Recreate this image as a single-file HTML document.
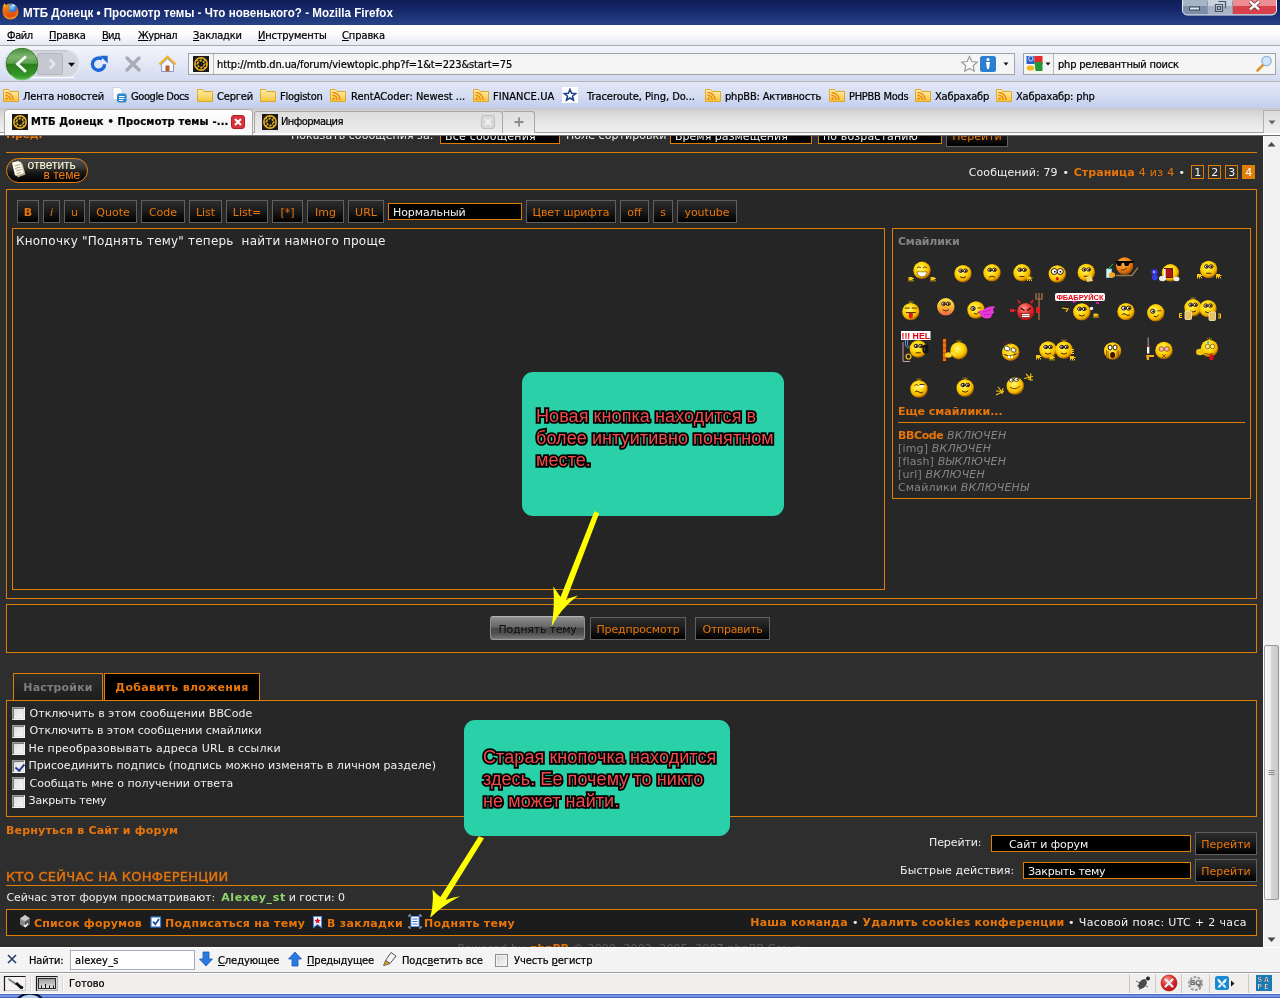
<!DOCTYPE html>
<html lang="ru">
<head>
<meta charset="utf-8">
<title>МТБ Донецк • Просмотр темы - Что новенького? - Mozilla Firefox</title>
<style>
*{box-sizing:border-box;margin:0;padding:0}
html,body{width:1280px;height:998px;overflow:hidden;background:#2e2e2e}
body>div{will-change:transform}
body{position:relative;font-family:"DejaVu Sans Condensed","Liberation Sans",sans-serif;font-size:11px;color:#000;-webkit-text-stroke:0.22px #000}
.abs{position:absolute}
/* ---------- window chrome ---------- */
#titlebar{position:absolute;left:0;top:0;width:1280px;height:25px;background:linear-gradient(#101e56 0%,#16286a 40%,#274388 100%)}
#title{position:absolute;left:23px;top:5px;font:bold 13px "Liberation Sans",sans-serif;color:#fff;white-space:nowrap;transform:scaleX(0.893);transform-origin:0 0}
#menubar{position:absolute;left:0;top:25px;width:1280px;height:21px;background:linear-gradient(#ffffff 0%,#fdfdfe 40%,#e6eaf6 100%);border-bottom:1px solid #a9a9a9}
#menubar span{position:absolute;top:4px;white-space:nowrap}
#menubar u{text-decoration:underline}
#navbar{position:absolute;left:0;top:46px;width:1280px;height:36px;background:linear-gradient(#f3f5fb 0%,#e4e8f6 50%,#d3daf0 100%);border-bottom:1px solid #b5b5b5}
#bmbar{position:absolute;left:0;top:82px;width:1280px;height:26px;background:linear-gradient(#e3e8f6 0%,#d2dbf2 60%,#c1cdec 100%)}
#bmbar .bm{position:absolute;top:8px;white-space:nowrap}
#tabbar{position:absolute;left:0;top:108px;width:1280px;height:28px;background:linear-gradient(#c4c6cc 0%,#d4d4d6 12%,#e2e2e2 40%,#ededed 75%,#f2f2f2 100%)}
/* ---------- page ---------- */
#page{position:absolute;left:0;top:136px;width:1263px;height:811px;background:#2e2e2e;overflow:hidden;font-family:"DejaVu Sans","Liberation Sans",sans-serif;font-size:11px;color:#eee}
#vscroll{position:absolute;left:1263px;top:136px;width:17px;height:811px;background:#f3f3f3}
#findbar{position:absolute;left:0;top:947px;width:1280px;height:26px;background:#f4f4f4;box-shadow:inset 0 1px 0 #fefefe;border-bottom:1px solid #9c9c9c}
#statusbar{position:absolute;left:0;top:973px;width:1280px;height:21px;background:#f0eeec;box-shadow:inset 0 1px 0 #fdfdfd,inset 0 -1px 0 #fbfbfb}
#taskbar{position:absolute;left:0;top:994px;width:1280px;height:4px;background:linear-gradient(#4463b4 0%,#5577cc 24%,#7596ea 40%,#7596ea 62%,#4a69b8 80%,#3f5eac 100%)}

/* page elements */
#page,#titlebar{-webkit-text-stroke:0}
#page *{white-space:nowrap}
.o{color:#e8750a}
.w{color:#f0f0f0}
.hr{position:absolute;height:1px;background:#de7e04}
.panel{position:absolute;border:1px solid #de7e04;background:#272727}
.btn{position:absolute;height:23px;border:1px solid #606060;background:linear-gradient(#2d2d2d 0%,#1c1c1c 45%,#000 100%);color:#e8750a;text-align:center;line-height:23px;font-size:11px}
.sel{position:absolute;height:17px;border:1px solid #de7e04;background:#000;color:#f4f4f4;line-height:17px;padding-left:4px;font-size:11px}
.cb{position:absolute;left:12px;width:13px;height:13px;border:1px solid #9a9a9a;border-right-color:#f6f6f6;border-bottom-color:#f6f6f6;background:linear-gradient(135deg,#dadada 0%,#ececec 55%,#f8f8f8 100%);box-shadow:inset 1px 1px 0 #7c7c7c,inset -1px -1px 0 #e0e0e0}
.cbl{position:absolute;left:29px;color:#f0f0f0;font-size:11px;line-height:14px}

.pg{top:29px;width:13px;height:14px;border:1px solid #de7e04;color:#f4f4f4;text-align:center;line-height:14px;font-size:11px;letter-spacing:-0.3px}
.pg.cur{background:#de7e04;color:#fff}
.btn.hot{border:1px solid #8e8e8e;border-top-color:#b4b4b4;border-bottom-color:#9c9c9c;border-radius:3px;background:linear-gradient(#8f8f8f 0%,#7c7c7c 20%,#666 46%,#484848 52%,#505050 75%,#787878 100%);color:#0c0c0c;line-height:26px}
.tab{height:28px;border:1px solid #de7e04;border-bottom:none;text-align:center;line-height:28px;font-weight:bold}
.cb.ck:after{content:"";position:absolute;left:3.800px;top:0.500px;width:3.500px;height:7px;border:solid #2a3a98;border-width:0 2px 2px 0;transform:rotate(40deg)}
.callout{position:absolute;background:#29d0a8;border-radius:11px}
.callout div{position:absolute;font:18px/22px "Liberation Sans",sans-serif;color:#f04a4a;letter-spacing:0.08px;-webkit-text-stroke:3.600px #000;paint-order:stroke fill;text-shadow:0 0 1px #000}
</style>
<style id="cal">
#m1{left:7.80px;letter-spacing:-0.404px}
#m2{left:49.70px;letter-spacing:-0.181px}
#m3{left:102.30px;letter-spacing:-0.759px}
#m4{left:138.00px;letter-spacing:-0.407px}
#m5{left:193.60px;letter-spacing:-0.142px}
#m6{left:258.60px;letter-spacing:-0.201px}
#m7{left:343.00px;letter-spacing:-0.091px}
#u1{left:217.50px;letter-spacing:-0.095px}
#u2{left:1058.50px;letter-spacing:-0.208px}
#bm1{left:23.75px;letter-spacing:-0.156px}
#bm2{left:131.90px;letter-spacing:-0.406px}
#bm3{left:217.75px;letter-spacing:-0.166px}
#bm4{left:280.60px;letter-spacing:-0.265px}
#bm5{left:351.50px;letter-spacing:0.004px}
#bm6{left:493.50px;letter-spacing:0.085px}
#bm7{left:588.25px;letter-spacing:-0.037px}
#bm8{left:726.00px;letter-spacing:-0.181px}
#bm9{left:849.00px;letter-spacing:-0.275px}
#bm10{left:935.00px;letter-spacing:-0.164px}
#bm11{left:1016.50px;letter-spacing:-0.164px}
#tt1{left:31.50px;letter-spacing:0.195px}
#tt2{left:281.90px;letter-spacing:-0.541px}
#fb0{left:75.50px;letter-spacing:0.161px}
#fb1{left:29.50px;letter-spacing:-0.176px}
#fb2{left:218.75px;letter-spacing:-0.065px}
#fb3{left:308.00px;letter-spacing:-0.177px}
#fb4{left:402.50px;letter-spacing:-0.089px}
#fb5{left:513.75px;letter-spacing:-0.085px}
#st1{left:69.50px;letter-spacing:-0.048px}
#a1{left:290.20px;letter-spacing:0.046px}
#a2{letter-spacing:0.198px}
#a3{left:565.20px;letter-spacing:0.061px}
#a4{letter-spacing:0.026px}
#a5{letter-spacing:0.135px}
#c1{left:968.75px;letter-spacing:0.084px}
#c2{left:1062.50px;letter-spacing:0.000px}
#c3{left:1073.75px;letter-spacing:0.042px}
#c4{left:1138.75px;letter-spacing:0.302px}
#c5{left:1178.50px;letter-spacing:0.000px}
#b1{letter-spacing:-0.090px}
#b2{letter-spacing:-0.145px}
#ta{left:15.50px;letter-spacing:0.205px}
#s1{left:898.75px;letter-spacing:-0.211px}
#s2{left:897.40px;letter-spacing:-0.029px}
#h1{letter-spacing:-0.225px}
#h2{letter-spacing:-0.165px}
#h3{letter-spacing:-0.290px}
#tb1{letter-spacing:0.171px}
#tb2{letter-spacing:0.345px}
#k1{left:29.45px;letter-spacing:0.074px}
#k2{left:29.45px;letter-spacing:-0.038px}
#k3{left:28.45px;letter-spacing:0.185px}
#k4{left:28.45px;letter-spacing:0.049px}
#k5{left:29.45px;letter-spacing:0.041px}
#k6{left:28.60px;letter-spacing:-0.233px}
#r1{left:5.40px;letter-spacing:0.196px}
#g1{left:928.75px;letter-spacing:-0.092px}
#g2{letter-spacing:-0.063px}
#g3{left:899.60px;letter-spacing:0.103px}
#g4{letter-spacing:-0.260px}
#q1{left:5.40px;letter-spacing:0.244px}
#w1{left:6.40px;letter-spacing:-0.039px}
#w2{left:221.20px;letter-spacing:0.660px}
#w3{left:288.80px;letter-spacing:-0.085px}
#f1{left:34.40px;letter-spacing:0.156px}
#f2{left:164.00px;letter-spacing:0.299px}
#f3{left:326.30px;letter-spacing:0.286px}
#f4{left:423.80px;letter-spacing:0.300px}
#f5{left:750.20px;letter-spacing:0.233px}
#f6{left:852.00px;letter-spacing:0.000px}
#f7{left:862.50px;letter-spacing:0.232px}
#f8{left:1068.00px;letter-spacing:0.000px}
#f9{left:1078.80px;letter-spacing:0.340px}
#p1{left:457.60px;letter-spacing:0.406px}
#p2{left:530.00px;letter-spacing:-0.391px}
#p3{left:572.75px;letter-spacing:0.148px}
</style>
</head>
<body>
<svg width="0" height="0" style="position:absolute">
<defs>
<linearGradient id="gF" x1="0" y1="0" x2="0" y2="1"><stop offset="0" stop-color="#fff3b0"/><stop offset="1" stop-color="#f2c43a"/></linearGradient>
<linearGradient id="gFb" x1="0" y1="0" x2="0" y2="1"><stop offset="0" stop-color="#f7d774"/><stop offset="1" stop-color="#e9a91e"/></linearGradient>
<linearGradient id="gBack" x1="0" y1="0" x2="0" y2="1"><stop offset="0" stop-color="#2e7e20"/><stop offset="0.5" stop-color="#2b7d1d"/><stop offset="0.85" stop-color="#339628"/><stop offset="1" stop-color="#4cb23e"/></linearGradient>
<linearGradient id="gBackT" x1="0" y1="0" x2="0" y2="1"><stop offset="0" stop-color="#4c913e"/><stop offset="0.55" stop-color="#7db56f"/><stop offset="1" stop-color="#5a9f4b"/></linearGradient>
<radialGradient id="gSm" cx="0.42" cy="0.38" r="0.62"><stop offset="0" stop-color="#fff580"/><stop offset="0.5" stop-color="#ffd808"/><stop offset="0.8" stop-color="#f2ae00"/><stop offset="1" stop-color="#9a5c00"/></radialGradient>
<radialGradient id="gRed" cx="0.4" cy="0.3" r="0.8"><stop offset="0" stop-color="#ff9a8a"/><stop offset="0.5" stop-color="#e02a2a"/><stop offset="1" stop-color="#a00d0d"/></radialGradient>
<symbol id="fav" viewBox="0 0 16 16"><rect width="16" height="16" fill="#1a1a1a"/><circle cx="8" cy="8" r="6.2" fill="none" stroke="#e8b020" stroke-width="1.5"/><circle cx="8" cy="8" r="3.3" fill="none" stroke="#e8b020" stroke-width="1.6" stroke-dasharray="2 1.4"/><circle cx="8" cy="8" r="1.3" fill="#1a1a1a"/><path d="M8 2v3M8 11v3M2 8h3M11 8h3M3.8 3.8l2 2M10.2 10.2l2 2M12.2 3.8l-2 2M5.8 10.2l-2 2" stroke="#e8b020" stroke-width="0.9"/></symbol>
<symbol id="folder" viewBox="0 0 16 16"><path d="M0.5 2.5h5l1.5 2h8.5v10h-15z" fill="url(#gF)" stroke="#e0a82a" stroke-width="1"/><path d="M0.5 5.5h15" stroke="#f6dc7a" stroke-width="1"/></symbol>
<symbol id="rss" viewBox="0 0 16 16"><path d="M0.5 2.5h5l1.5 2h8.5v10h-15z" fill="url(#gF)" stroke="#e0a82a" stroke-width="1"/><circle cx="3.6" cy="11.8" r="1.3" fill="#f08a10"/><path d="M2.4 8.2a4.6 4.6 0 0 1 4.8 4.8" fill="none" stroke="#f08a10" stroke-width="1.5"/><path d="M2.4 5.4a7.4 7.4 0 0 1 7.6 7.6" fill="none" stroke="#f08a10" stroke-width="1.5"/></symbol>
<linearGradient id="gTh" x1="0" y1="0" x2="1" y2="0"><stop offset="0" stop-color="#fafafa"/><stop offset="0.45" stop-color="#ededed"/><stop offset="0.5" stop-color="#d6d6d6"/><stop offset="1" stop-color="#c8c8c8"/></linearGradient>
<radialGradient id="gOr" cx="0.4" cy="0.35" r="0.7"><stop offset="0" stop-color="#ffb040"/><stop offset="0.6" stop-color="#f08010"/><stop offset="1" stop-color="#a04800"/></radialGradient>
<linearGradient id="gBl" x1="0" y1="0" x2="0" y2="1"><stop offset="0" stop-color="#ffe24a"/><stop offset="0.5" stop-color="#f8b830"/><stop offset="1" stop-color="#f06048"/></linearGradient>
<linearGradient id="gRul" x1="0" y1="0" x2="0" y2="1"><stop offset="0" stop-color="#9a9a9a"/><stop offset="1" stop-color="#e8e8e8"/></linearGradient>
<linearGradient id="gFx" x1="0" y1="0" x2="0" y2="1"><stop offset="0" stop-color="#e05a10"/><stop offset="1" stop-color="#f09020"/></linearGradient>
<linearGradient id="gFx2" x1="0" y1="0" x2="0.300" y2="1"><stop offset="0" stop-color="#f8b020"/><stop offset="0.400" stop-color="#f07a10"/><stop offset="1" stop-color="#e04a08"/></linearGradient>
<radialGradient id="gGl" cx="0.500" cy="0.300" r="0.800"><stop offset="0" stop-color="#8adcff"/><stop offset="0.500" stop-color="#2a78d8"/><stop offset="1" stop-color="#1a3a9a"/></radialGradient>
</defs></svg>

<div id="titlebar"><svg class="abs" style="left:0;top:0" width="1280" height="25" viewBox="0 0 1280 25">
<circle cx="10.500" cy="11.500" r="8" fill="url(#gFx)"/><circle cx="11.500" cy="9.300" r="5.600" fill="url(#gGl)"/><path d="M12 4.500c1.500-0.500 3 0.500 3.500 2c-1-0.500-2-0.300-2.500 0.500z" fill="#d8f0ff"/><path d="M2.800 7.500c0.200-1.800 1-3.300 1.800-4.200c0.200 1 0.700 1.700 1.500 2.100c1-0.900 2.500-1.300 3.500-1c-1.200 0.700-1.600 1.700-1 2.600c1 0 2 0.400 2.500 1c-1.500 0.200-2.500 1-2.500 2c0.500 1.500 2.500 2.500 4.500 2c2-0.500 3.500-2 4-4c0.800 3-0.200 6-2 7.700c-2 1.800-5 2.300-7.500 1.300c-3-1.200-5-4-5-7c0-1 0-1.800 0.200-2.500z" fill="url(#gFx2)"/><path d="M4.600 3.300c0.200 1 0.700 1.700 1.500 2.100l-1.800 1.800z" fill="#f8c020"/>
<path d="M1182.500 0v10c0 3 2 5 5 5h84c3 0 5-2 5-5V0z" fill="#8a9ab0" stroke="#e8ecf4" stroke-width="1"/>
<path d="M1183 0h24v14h-19c-3 0-5-2-5-4z" fill="#7d8ea6"/><rect x="1183" y="0" width="24" height="6" fill="#b8c4d4" opacity="0.700"/>
<rect x="1208" y="0" width="24" height="14" fill="#a8b4c6"/><rect x="1208" y="0" width="24" height="6" fill="#d0d8e4" opacity="0.800"/>
<path d="M1233 0h43v10c0 2-2 4-5 4h-38z" fill="#d8404a"/><rect x="1233" y="0" width="43" height="6" fill="#f0a0a4" opacity="0.800"/>
<rect x="1189.500" y="7" width="10" height="3" fill="#e4e8f0" stroke="#3a4658" stroke-width="1"/>
<path d="M1215.500 4.500h7v7h-7zM1218.500 1.500h7v7" fill="none" stroke="#4a5668" stroke-width="1.200"/><rect x="1217.500" y="6.500" width="3" height="3" fill="none" stroke="#4a5668" stroke-width="1"/>
<path d="M1250 1.500l9 8M1259 1.500l-9 8" stroke="#6a2a30" stroke-width="4"/><path d="M1250 1.500l9 8M1259 1.500l-9 8" stroke="#fff" stroke-width="2.400"/>
</svg><div id="title">МТБ Донецк • Просмотр темы - Что новенького? - Mozilla Firefox</div></div>
<div id="menubar">
<span id="m1" style="left:7px"><u>Ф</u>айл</span>
<span id="m2" style="left:49px"><u>П</u>равка</span>
<span id="m3" style="left:102px"><u>В</u>ид</span>
<span id="m4" style="left:138px"><u>Ж</u>урнал</span>
<span id="m5" style="left:193px"><u>З</u>акладки</span>
<span id="m6" style="left:258px"><u>И</u>нструменты</span>
<span id="m7" style="left:342px"><u>С</u>правка</span>
</div>
<div id="navbar">
<svg class="abs" style="left:0;top:0" width="190" height="36" viewBox="0 46 190 36">
<path d="M16 50.500h51c7.500 0 12.500 6 12.500 13.500s-5 13.500-12.500 13.500H16C8.500 77.500 3.500 71.500 3.500 64S8.500 50.500 16 50.500z" fill="#d5d7e0" stroke="#e6e8f2" stroke-width="1.500"/>
<path d="M12 50.800h56" stroke="#b6b8c2" stroke-width="1"/><path d="M12 77.600h62" stroke="#fafbff" stroke-width="1.200"/>
<rect x="37.500" y="53.500" width="25" height="21" rx="1.500" fill="#c5c7d1" stroke="#b4b6c0" stroke-width="1"/>
<path d="M49.800 59.300l4.600 4.600-4.600 4.600" fill="none" stroke="#e6e8f0" stroke-width="2.400"/>
<path d="M68 62.800h7l-3.500 4z" fill="#0a0a0a"/>
<circle cx="22" cy="64" r="15.700" fill="url(#gBack)" stroke="#2f7a22" stroke-width="1"/>
<path d="M6.800 63.800a15.200 15.200 0 0 1 30.400 0z" fill="url(#gBackT)"/>
<path d="M10.500 74.500a15.500 15.500 0 0 0 23 0" fill="none" stroke="#7fd472" stroke-width="1.200" opacity="0.800"/>
<path d="M24.900 57.300l-7.500 6.800 7.500 6.800" fill="none" stroke="#fff" stroke-width="2.700" stroke-linecap="square"/>
<path d="M104.600 64.200a6.100 6.100 0 1 1-2.600-5" fill="none" stroke="#1a68d6" stroke-width="3.400"/>
<path d="M100.200 55.800h7.500v7.600z" fill="#1a68d6"/>
<path d="M127 58l12 12M139 58l-12 12" stroke="#a9abb6" stroke-width="3.400" stroke-linecap="round"/>
<path d="M159.500 64.500l8-7.500 8 7.500" fill="none" stroke="#f0b428" stroke-width="2.600" stroke-linejoin="miter"/>
<path d="M161.500 64.200l6-5.500 6 5.500v7.300h-12z" fill="#f4f6fc" stroke="#8c9ad0" stroke-width="1"/>
<rect x="165.500" y="65.500" width="4" height="6" fill="#b2622a"/>
</svg>
<div class="abs" style="left:188px;top:7px;width:827px;height:22px;border:1px solid #a3a3a3;background:#f5f5f5"></div>
<div class="abs" style="left:213px;top:8px;width:1px;height:20px;background:#b9b9b9"></div>
<svg class="abs" style="left:193px;top:10px" width="16" height="16"><use href="#fav"/></svg>
<div class="abs" id="u1" style="left:217px;top:12px;white-space:nowrap">http://mtb.dn.ua/forum/viewtopic.php?f=1&amp;t=223&amp;start=75</div>
<svg class="abs" style="left:960px;top:9px" width="52" height="18" viewBox="960 55 52 18">
<path d="M969.500 56.500l2.300 5 5.400 0.600-4 3.700 1.100 5.400-4.800-2.700-4.800 2.700 1.100-5.400-4-3.700 5.400-0.600z" fill="#fafafa" stroke="#9a9a9a" stroke-width="1.200"/>
<rect x="980" y="56" width="16" height="16" rx="2.500" fill="#2a7fd0"/>
<circle cx="988" cy="59.500" r="1.600" fill="#fff"/><path d="M986 62h4l-1 7h-2z" fill="#fff"/>
<path d="M1003.500 62.500h5l-2.500 3z" fill="#111"/>
</svg>
<div class="abs" style="left:1023px;top:7px;width:253px;height:22px;border:1px solid #a3a3a3;background:#f5f5f5"></div>
<div class="abs" style="left:1053px;top:8px;width:1px;height:20px;background:#b9b9b9"></div>
<svg class="abs" style="left:1024px;top:8px" width="30" height="20" viewBox="1024 54 30 20">
<path d="M1026.500 56h8v8h-8z" fill="#2a62c8"/><path d="M1034.500 56h8v8h-8z" fill="#e62a2a"/><path d="M1034.500 62h8v9h-7z" fill="#1f9a3a"/><ellipse cx="1030.500" cy="68" rx="3.800" ry="2.600" fill="#f0b818"/><ellipse cx="1030.800" cy="58.500" rx="2.200" ry="2.600" fill="#2a62c8" stroke="#f5f5f5" stroke-width="0.800"/>
<path d="M1045.500 62.500h5l-2.500 3z" fill="#111"/>
</svg>
<div class="abs" id="u2" style="left:1058px;top:12px;white-space:nowrap">php релевантный поиск</div>
<svg class="abs" style="left:1255px;top:9px" width="18" height="18" viewBox="0 0 18 18"><path d="M2.500 15.500l6-6" stroke="#e0922a" stroke-width="2.600" stroke-linecap="round"/><circle cx="11.500" cy="6" r="4.600" fill="#cfe8fb" stroke="#8db4dc" stroke-width="1.400"/></svg>
</div>
<div id="bmbar">
<svg class="abs" style="left:3px;top:5px" width="16" height="16"><use href="#rss"/></svg><span class="bm" id="bm1" style="left:23px">Лента новостей</span>
<svg class="abs" style="left:112px;top:5px" width="16" height="16" viewBox="0 0 16 16"><path d="M1 0.500h6.500l3 3v9h-9.500z" fill="#fdfdfd" stroke="#c8ccd8" stroke-width="0.800"/><rect x="5" y="6.500" width="9.500" height="9" rx="2" fill="#2f86c8"/><path d="M7 9.500h5.500M7 11.500h5.500M7 13.500h4" stroke="#fff" stroke-width="1"/></svg><span class="bm" id="bm2" style="left:131px">Google Docs</span>
<svg class="abs" style="left:197px;top:5px" width="16" height="16"><use href="#folder"/></svg><span class="bm" id="bm3" style="left:217px">Сергей</span>
<svg class="abs" style="left:260px;top:5px" width="16" height="16"><use href="#folder"/></svg><span class="bm" id="bm4" style="left:280px">Flogiston</span>
<svg class="abs" style="left:330px;top:5px" width="16" height="16"><use href="#rss"/></svg><span class="bm" id="bm5" style="left:351px">RentACoder: Newest ...</span>
<svg class="abs" style="left:473px;top:5px" width="16" height="16"><use href="#rss"/></svg><span class="bm" id="bm6" style="left:493px">FINANCE.UA</span>
<svg class="abs" style="left:562px;top:5px" width="16" height="16" viewBox="0 0 16 16"><rect width="16" height="16" fill="#fff"/><path d="M8 2.500l1.600 3.800 4 0.300-3.100 2.600 1 4-3.500-2.200-3.500 2.200 1-4-3.100-2.600 4-0.300z" fill="none" stroke="#1c3c8c" stroke-width="1.500"/></svg><span class="bm" id="bm7" style="left:587px">Traceroute, Ping, Do...</span>
<svg class="abs" style="left:705px;top:5px" width="16" height="16"><use href="#rss"/></svg><span class="bm" id="bm8" style="left:725px">phpBB: Активность</span>
<svg class="abs" style="left:829px;top:5px" width="16" height="16"><use href="#rss"/></svg><span class="bm" id="bm9" style="left:849px">PHPBB Mods</span>
<svg class="abs" style="left:915px;top:5px" width="16" height="16"><use href="#rss"/></svg><span class="bm" id="bm10" style="left:935px">Хабрахабр</span>
<svg class="abs" style="left:996px;top:5px" width="16" height="16"><use href="#rss"/></svg><span class="bm" id="bm11" style="left:1016px">Хабрахабр: php</span>
</div>
<div id="tabbar">
<div class="abs" style="left:0;top:24px;width:1280px;height:1px;background:#9d9d9d"></div>
<div class="abs" style="left:0;top:25px;width:1280px;height:3px;background:#fff"></div>
<div class="abs" id="edge" style="left:0;top:27px;width:1280px;height:1px;background:#6e6e6e;z-index:3"></div>
<div class="abs" style="left:254px;top:3px;width:249px;height:22px;border:1px solid #a8a8a8;border-bottom:none;border-radius:3px 3px 0 0;background:linear-gradient(#dedede,#ececec)"></div>
<div class="abs" style="left:503px;top:3px;width:32px;height:22px;border:1px solid #a8a8a8;border-bottom:none;border-left:none;border-radius:0 3px 0 0;background:linear-gradient(#dedede,#ececec)"></div>
<div class="abs" style="left:4px;top:1px;width:249px;height:27px;border:1px solid #a8a8a8;border-bottom:none;border-radius:4px 4px 0 0;background:linear-gradient(#ffffff,#f4f4f4 60%,#ffffff)"></div>
<svg class="abs" style="left:12px;top:6px" width="16" height="16"><use href="#fav"/></svg>
<div class="abs" id="tt1" style="left:31px;top:7px;font-weight:bold;white-space:nowrap">МТБ Донецк • Просмотр темы -...</div>
<svg class="abs" style="left:231px;top:7px" width="14" height="14" viewBox="0 0 14 14"><rect x="0.500" y="0.500" width="13" height="13" rx="2.500" fill="#d8323a" stroke="#b81c24"/><path d="M4 4l6 6M10 4l-6 6" stroke="#fff" stroke-width="2"/></svg>
<svg class="abs" style="left:262px;top:6px" width="16" height="16"><use href="#fav"/></svg>
<div class="abs" id="tt2" style="left:281px;top:7px;white-space:nowrap">Информация</div>
<svg class="abs" style="left:481px;top:7px" width="14" height="14" viewBox="0 0 14 14"><rect x="0.500" y="0.500" width="13" height="13" rx="2.500" fill="#d9d9d9" stroke="#bdbdbd"/><path d="M4 4l6 6M10 4l-6 6" stroke="#f1f1f1" stroke-width="2"/></svg>
<svg class="abs" style="left:513px;top:8px" width="12" height="12" viewBox="0 0 12 12"><path d="M6 1.500v9M1.500 6h9" stroke="#8a8a8a" stroke-width="1.800"/></svg>
<div class="abs" style="left:1263px;top:2px;width:17px;height:23px;border:1px solid #b0b0b0;border-right:none;border-bottom:none;background:linear-gradient(#dcdcdc,#f0f0f0)"></div>
<svg class="abs" style="left:1268px;top:12px" width="8" height="5" viewBox="0 0 8 5"><path d="M0.500 0.500h7l-3.500 4z" fill="#666"/></svg>
</div>
<div id="page">
<div class="abs o" style="left:6px;top:-8px;font-weight:bold;font-size:11px;letter-spacing:-0.3px">Пред:</div>
<div id="a1" class="abs" style="left:291px;top:-7px;color:#f0f0f0">Показать сообщения за:</div>
<div id="a2" class="sel" style="left:440px;top:-9px;width:120px">Все сообщения</div>
<div id="a3" class="abs" style="left:566px;top:-7px;color:#f0f0f0">Поле сортировки</div>
<div id="a4" class="sel" style="left:670px;top:-9px;width:142px">Время размещения</div>
<div id="a5" class="sel" style="left:818px;top:-9px;width:124px">по возрастанию</div>
<div class="btn" style="left:946px;top:-12px;width:62px">Перейти</div>
<div class="hr" style="left:6px;top:16px;width:1251px"></div>

<div id="reply" class="abs" style="left:6px;top:22px;width:82px;height:25px;border:1.5px solid #e8800f;border-radius:12.5px;background:linear-gradient(#4e4e4e 0%,#3a3a3a 35%,#161616 60%,#000 100%)">
<svg class="abs" style="left:2px;top:1px" width="20" height="21" viewBox="8 160 20 21"><path d="M13.500 165.500l8-2 3 11-8 3z" fill="#b8a888"/><path d="M12 164l8-2.500 3.500 11.500-8.500 3z" fill="#d8ceb4"/><path d="M11 162.500l6.500-1.500 2 2 3 10-8.500 2.500z" fill="#fffdf0"/><path d="M13.500 166l5.500-1.500M14.200 168.500l5.500-1.500M15 171l5.500-1.500M15.700 173.500l4-1" stroke="#9a9480" stroke-width="0.900"/></svg>
<span class="abs" style="left:20.500px;top:-1px;color:#ffffd8;font:12px 'Liberation Sans',sans-serif">ответить</span>
<span class="abs" style="left:36.500px;top:9px;color:#f47a10;font:12px 'Liberation Sans',sans-serif;letter-spacing:0">в теме</span>
</div>
<div class="abs w" id="c1" style="top:30px">Сообщений: 79</div><div class="abs w" id="c2" style="top:30px">•</div><div class="abs o" id="c3" style="top:30px;font-weight:bold">Страница</div><div class="abs o" id="c4" style="top:30px">4 из 4</div><div class="abs w" id="c5" style="top:30px">•</div>
<div class="abs pg" style="left:1191px">1</div><div class="abs pg" style="left:1208px">2</div><div class="abs pg" style="left:1225px">3</div><div class="abs pg cur" style="left:1242px">4</div>

<div class="panel" style="left:6px;top:53px;width:1251px;height:410px"></div>
<div class="btn" style="left:17px;top:64px;width:22px;font-weight:bold">B</div>
<div class="btn" style="left:43px;top:64px;width:17px;font-style:italic">i</div>
<div class="btn" style="left:64px;top:64px;width:21px">u</div>
<div class="btn" style="left:89px;top:64px;width:48px">Quote</div>
<div class="btn" style="left:141px;top:64px;width:44px">Code</div>
<div class="btn" style="left:189px;top:64px;width:33px">List</div>
<div class="btn" style="left:226px;top:64px;width:42px">List=</div>
<div class="btn" style="left:272px;top:64px;width:31px">[*]</div>
<div class="btn" style="left:307px;top:64px;width:37px">Img</div>
<div class="btn" style="left:348px;top:64px;width:36px">URL</div>
<div id="b1" class="sel" style="left:388px;top:67px;width:134px">Нормальный</div>
<div id="b2" class="btn" style="left:526px;top:64px;width:90px">Цвет шрифта</div>
<div class="btn" style="left:620px;top:64px;width:29px">off</div>
<div class="btn" style="left:653px;top:64px;width:20px">s</div>
<div class="btn" style="left:677px;top:64px;width:60px">youtube</div>

<div class="panel" style="left:12px;top:92px;width:873px;height:362px;background:#252525"></div>
<div id="ta" class="abs" style="left:16px;top:98px;color:#f0f0f0;font-size:12px;white-space:pre">Кнопочку "Поднять тему" теперь  найти намного проще</div>

<div class="panel" style="left:892px;top:92px;width:359px;height:271px"></div>
<div id="s1" class="abs" style="left:898px;top:99px;color:#848484;font-weight:bold">Смайлики</div>
<svg id="smilies" class="abs" style="left:892px;top:114px" width="360" height="156" viewBox="892 250 360 156">
<g transform="translate(922.0 270.3)"><circle r="8.7" fill="url(#gSm)"/><path d="M-5-2.500q2-2 4 0M1-2.500q2-2 4 0" fill="none" stroke="#5a3a00" stroke-width="0.900"/><path d="M-5 1.500h10q-1 5-5 5t-5-5z" fill="#fff" stroke="#7a4a00" stroke-width="0.600"/></g>
<path d="M908.5 277.0h4v1h1.500v1h-1.500v1h-4z" fill="#f7c40e"/><path d="M908.5 280.0h1v1.500h-1zM910.5 280.0h1v1.500h-1zM912.5 280.0h1v1.500h-1z" fill="#f7c40e"/>
<path d="M930.5 277.0h4v1h1.500v1h-1.500v1h-4z" fill="#f7c40e"/><path d="M930.5 280.0h1v1.500h-1zM932.5 280.0h1v1.500h-1zM934.5 280.0h1v1.500h-1z" fill="#f7c40e"/>
<g transform="translate(963.0 273.7)"><circle r="8.7" fill="url(#gSm)"/><ellipse cx="-2.200" cy="-3" rx="2" ry="1.700" fill="#fff" stroke="#2a1200" stroke-width="1"/><ellipse cx="2.400" cy="-3" rx="2" ry="1.700" fill="#fff" stroke="#2a1200" stroke-width="1"/><circle cx="-1.800" cy="-2.800" r="1" fill="#100800"/><circle cx="2.800" cy="-2.800" r="1" fill="#100800"/><path d="M-3 3q3 2.500 6 0" fill="none" stroke="#4a2200" stroke-width="1"/></g>
<g transform="translate(992.0 272.8)"><circle r="8.7" fill="url(#gSm)"/><ellipse cx="-2.200" cy="-3" rx="2" ry="1.700" fill="#fff" stroke="#2a1200" stroke-width="1"/><ellipse cx="2.400" cy="-3" rx="2" ry="1.700" fill="#fff" stroke="#2a1200" stroke-width="1"/><circle cx="-1.800" cy="-2.800" r="1" fill="#100800"/><circle cx="2.800" cy="-2.800" r="1" fill="#100800"/><path d="M-3 4.500q3-2.500 6 0" fill="none" stroke="#4a2200" stroke-width="1"/></g>
<g transform="translate(1022.0 272.8)"><circle r="8.7" fill="url(#gSm)"/><ellipse cx="-2.200" cy="-3" rx="2" ry="1.700" fill="#fff" stroke="#2a1200" stroke-width="1"/><ellipse cx="2.400" cy="-3" rx="2" ry="1.700" fill="#fff" stroke="#2a1200" stroke-width="1"/><circle cx="-1.800" cy="-2.800" r="1" fill="#100800"/><circle cx="2.800" cy="-2.800" r="1" fill="#100800"/><path d="M-2.500 3.800h5" fill="none" stroke="#4a2200" stroke-width="1"/></g>
<path d="M1027.0 276.5h4v1h1.500v1h-1.500v1h-4z" fill="#f7c40e"/><path d="M1027.0 279.5h1v1.500h-1zM1029.0 279.5h1v1.500h-1zM1031.0 279.5h1v1.500h-1z" fill="#f7c40e"/>
<g transform="translate(1057.3 274.0)"><circle r="8.7" fill="url(#gSm)"/><circle cx="-3" cy="-2.500" r="3" fill="#fff" stroke="#2a1200" stroke-width="1"/><circle cx="3" cy="-2.500" r="3" fill="#fff" stroke="#2a1200" stroke-width="1"/><circle cx="-2.500" cy="-2.300" r="0.900" fill="#201000"/><circle cx="3.200" cy="-2.300" r="0.900" fill="#201000"/><ellipse cx="0" cy="4.800" rx="1.600" ry="1.800" fill="#d02010"/></g>
<g transform="translate(1086.3 272.5)"><circle r="8.7" fill="url(#gSm)"/><ellipse cx="-2.200" cy="-3" rx="2" ry="1.700" fill="#fff" stroke="#2a1200" stroke-width="1"/><ellipse cx="2.400" cy="-3" rx="2" ry="1.700" fill="#fff" stroke="#2a1200" stroke-width="1"/><circle cx="-1.800" cy="-2.800" r="1" fill="#100800"/><circle cx="2.800" cy="-2.800" r="1" fill="#100800"/><path d="M-2.500 3.800h5" fill="none" stroke="#4a2200" stroke-width="1"/></g>
<path d="M1086 277l5-2 2 6-6 1z" fill="#f3d46a"/>
<g transform="translate(1124.6 265.8)"><circle r="8.6" fill="url(#gOr)"/></g>
<path d="M1115 261h19l-1 2h-3l-2 3h-3l-1-3h-2l-1 3h-3l-2-3z" fill="#050505"/><path d="M1121 270q3 1 6-2" stroke="#5a2a00" stroke-width="0.900" fill="none"/>
<path d="M1116 275.500h16l6-8" fill="none" stroke="#9a7a4a" stroke-width="1.300"/><rect x="1106.500" y="269" width="5" height="8.500" fill="#d8f4f4" stroke="#7ad0d0" stroke-width="0.800"/><path d="M1108 269l5-5" stroke="#20d040" stroke-width="0.900"/><ellipse cx="1112" cy="275" rx="3.200" ry="2.800" fill="#f4a820"/>
<g transform="translate(1170.4 272.8)"><circle r="8.7" fill="url(#gSm)"/></g>
<rect x="1164.500" y="268.500" width="8" height="9" fill="#b01818" stroke="#400" stroke-width="0.800"/><rect x="1163.800" y="269" width="1.800" height="8" fill="#fff"/><ellipse cx="1154.500" cy="272" rx="3.200" ry="3" fill="#3a3adf"/><ellipse cx="1154.800" cy="277.500" rx="3" ry="2.800" fill="#3a3adf"/><circle cx="1154" cy="272" r="1" fill="#c8c8ff"/><ellipse cx="1162.500" cy="278.500" rx="3.500" ry="2.800" fill="#eee"/><ellipse cx="1176.500" cy="279" rx="3" ry="2.200" fill="#eee"/>
<g transform="translate(1208.7 269.5)"><circle r="8.7" fill="url(#gSm)"/><ellipse cx="-2.200" cy="-3" rx="2" ry="1.700" fill="#fff" stroke="#2a1200" stroke-width="1"/><ellipse cx="2.400" cy="-3" rx="2" ry="1.700" fill="#fff" stroke="#2a1200" stroke-width="1"/><circle cx="-1.800" cy="-2.800" r="1" fill="#100800"/><circle cx="2.800" cy="-2.800" r="1" fill="#100800"/><path d="M-2.500 3.800h5" fill="none" stroke="#4a2200" stroke-width="1"/></g>
<path d="M1197.0 274.0h4v1h1.500v1h-1.500v1h-4z" fill="#f7c40e"/><path d="M1197.0 277.0h1v1.500h-1zM1199.0 277.0h1v1.500h-1zM1201.0 277.0h1v1.500h-1z" fill="#f7c40e"/>
<path d="M1216.0 274.0h4v1h1.500v1h-1.500v1h-4z" fill="#f7c40e"/><path d="M1216.0 277.0h1v1.500h-1zM1218.0 277.0h1v1.500h-1zM1220.0 277.0h1v1.500h-1z" fill="#f7c40e"/>
<path d="M908.3 301.1l2 2M913.3 301.1l-2 2M910.8 300.6v2.500" stroke="#c89000" stroke-width="0.800" fill="none"/>
<g transform="translate(910.8 311.6)"><circle r="8.7" fill="url(#gSm)"/><path d="M-6-3.500h5M1-3.500h5" stroke="#5a3000" stroke-width="1"/><path d="M-5 1h10" stroke="#4a2200" stroke-width="1"/><path d="M-2 1.500h4v3.500a2 2 0 0 1-4 0z" fill="#e01828"/></g>
<g transform="translate(945.8 306.8)"><circle r="8.7" fill="url(#gBl)"/><ellipse cx="-2.200" cy="-3" rx="2" ry="1.700" fill="#fff" stroke="#2a1200" stroke-width="1"/><ellipse cx="2.400" cy="-3" rx="2" ry="1.700" fill="#fff" stroke="#2a1200" stroke-width="1"/><circle cx="-1.800" cy="-2.800" r="1" fill="#100800"/><circle cx="2.800" cy="-2.800" r="1" fill="#100800"/><path d="M-3 3q3 2.500 6 0" fill="none" stroke="#4a2200" stroke-width="1"/></g>
<g transform="translate(976.0 310.0)"><circle r="8.7" fill="url(#gSm)"/><ellipse cx="-3" cy="-1.500" rx="2.200" ry="2" fill="#fff" stroke="#2a1200" stroke-width="1"/><circle cx="-2.500" cy="-1.300" r="1.100" fill="#100800"/><path d="M1.500-2h4" stroke="#5a3000" stroke-width="0.900"/><path d="M-2 3.500q3 2 5-1.500" fill="none" stroke="#4a2200" stroke-width="1"/></g>
<path d="M978 311q6-1 9-3.500q5-2 8-1l-2 3 1 3-2 2-1 3q-4 2-8 0q-3-2-5-6.500z" fill="#e838d8"/><path d="M983 312l8-2M984 315l7-1" stroke="#b018a8" stroke-width="0.700"/>
<path d="M1019 304l-2-5 4 3zM1032 304l2-5-4 3z" fill="#e02020"/>
<g transform="translate(1025.7 311.6)"><circle r="8.6" fill="url(#gRed)"/></g>
<path d="M1020.500 308l4 2.500M1031 308l-4 2.500" stroke="#300" stroke-width="1.200"/><rect x="1021.500" y="313.500" width="8.500" height="4" fill="#fff" stroke="#600" stroke-width="0.600"/><path d="M1021.500 315.500h8.500" stroke="#600" stroke-width="0.500"/><path d="M1039 293v27M1036 293v6h6v-6" fill="none" stroke="#b07a4a" stroke-width="1.200"/><path d="M1010 309h4v1h2v1h-2v1h-4z" fill="#e02020"/><path d="M1036 307h4v6h-4z" fill="#e02020"/>
<rect x="1055" y="293" width="50" height="8" rx="2" fill="#fff"/>
<text x="1056.500" y="299.800" font-family="Liberation Sans,sans-serif" font-weight="bold" font-size="7.500" fill="#e80010" textLength="47" lengthAdjust="spacingAndGlyphs">ФБАБРУЙСК</text>
<path d="M1073 302.500l3-1.500M1096 302.500l3 1" stroke="#e020d0" stroke-width="1.800"/>
<g transform="translate(1081.8 311.9)"><circle r="8.7" fill="url(#gSm)"/><ellipse cx="-2.200" cy="-3" rx="2" ry="1.700" fill="#fff" stroke="#2a1200" stroke-width="1"/><ellipse cx="2.400" cy="-3" rx="2" ry="1.700" fill="#fff" stroke="#2a1200" stroke-width="1"/><circle cx="-1.800" cy="-2.800" r="1" fill="#100800"/><circle cx="2.800" cy="-2.800" r="1" fill="#100800"/><path d="M-3 3q3 2.500 6 0" fill="none" stroke="#4a2200" stroke-width="1"/></g>
<circle cx="1091.500" cy="308.500" r="1.800" fill="#eee"/>
<path d="M1093.5 313.5h4v1h1.500v1h-1.500v1h-4z" fill="#f7c40e"/><path d="M1093.5 316.5h1v1.500h-1zM1095.5 316.5h1v1.500h-1zM1097.5 316.5h1v1.500h-1z" fill="#f7c40e"/>
<path d="M1062 308l6 1-2 3" fill="none" stroke="#f7c40e" stroke-width="1.200"/>
<g transform="translate(1126.0 311.6)"><circle r="8.7" fill="url(#gSm)"/><ellipse cx="-2.200" cy="-3.500" rx="2.300" ry="2" fill="#fff" stroke="#2a1200" stroke-width="1"/><ellipse cx="2.600" cy="-3.500" rx="2.300" ry="2" fill="#fff" stroke="#2a1200" stroke-width="1"/><circle cx="-1.400" cy="-3.200" r="1.100" fill="#100800"/><circle cx="3.200" cy="-3.200" r="1.100" fill="#100800"/><path d="M-4 3q2-2 4 0t4 0" fill="none" stroke="#4a2200" stroke-width="1"/></g>
<g transform="translate(1155.8 312.8)"><circle r="8.7" fill="url(#gSm)"/><ellipse cx="-3" cy="-1.500" rx="2.200" ry="2" fill="#fff" stroke="#2a1200" stroke-width="1"/><circle cx="-2.500" cy="-1.300" r="1.100" fill="#100800"/><path d="M1.500-2h4" stroke="#5a3000" stroke-width="0.900"/><path d="M-2 3.500q3 2 5-1.500" fill="none" stroke="#4a2200" stroke-width="1"/></g>
<path d="M1190.5 297.3l2 2M1195.5 297.3l-2 2M1193.0 296.8v2.500" stroke="#c89000" stroke-width="0.800" fill="none"/>
<g transform="translate(1193.0 307.8)"><circle r="8.7" fill="url(#gSm)"/><ellipse cx="-2.200" cy="-3" rx="2" ry="1.700" fill="#fff" stroke="#2a1200" stroke-width="1"/><ellipse cx="2.400" cy="-3" rx="2" ry="1.700" fill="#fff" stroke="#2a1200" stroke-width="1"/><circle cx="-1.800" cy="-2.800" r="1" fill="#100800"/><circle cx="2.800" cy="-2.800" r="1" fill="#100800"/><path d="M-3 3q3 2.500 6 0" fill="none" stroke="#4a2200" stroke-width="1"/></g>
<g transform="translate(1208.0 308.6)"><circle r="8.7" fill="url(#gSm)"/><ellipse cx="-2.200" cy="-3" rx="2" ry="1.700" fill="#fff" stroke="#2a1200" stroke-width="1"/><ellipse cx="2.400" cy="-3" rx="2" ry="1.700" fill="#fff" stroke="#2a1200" stroke-width="1"/><circle cx="-1.800" cy="-2.800" r="1" fill="#100800"/><circle cx="2.800" cy="-2.800" r="1" fill="#100800"/><path d="M-3 3q3 2.500 6 0" fill="none" stroke="#4a2200" stroke-width="1"/></g>
<rect x="1185" y="311" width="6.500" height="8.500" rx="1" fill="#e8c060" stroke="#f8f0c0" stroke-width="0.800"/><rect x="1209" y="312" width="6.500" height="8.500" rx="1" fill="#e8c060" stroke="#f8f0c0" stroke-width="0.800"/>
<path d="M1179 313h3v1h-2v1h2v1h-2v1h2v1h-3zM1221 313.500h-3v1h2v1h-2v1h2v1h-2v1h3z" fill="#f7c40e"/>
<rect x="901" y="331" width="29.500" height="9" fill="#fff"/>
<text x="901.500" y="338.800" font-family="Liberation Sans,sans-serif" font-weight="bold" font-size="9" fill="#e80010" textLength="28.500" lengthAdjust="spacingAndGlyphs">!!! HEL</text>
<path d="M903 342v19.500h7" fill="none" stroke="#c8a0a0" stroke-width="1"/><path d="M905.500 340v6l3 2M907.500 340v5l2 2" fill="none" stroke="#6a9ae8" stroke-width="0.900"/>
<g transform="translate(918.3 349.0)"><circle r="8.7" fill="url(#gSm)"/><ellipse cx="-2.200" cy="-3" rx="2" ry="1.700" fill="#fff" stroke="#2a1200" stroke-width="1"/><ellipse cx="2.400" cy="-3" rx="2" ry="1.700" fill="#fff" stroke="#2a1200" stroke-width="1"/><circle cx="-1.800" cy="-2.800" r="1" fill="#100800"/><circle cx="2.800" cy="-2.800" r="1" fill="#100800"/><path d="M-2.500 3.800h5" fill="none" stroke="#4a2200" stroke-width="1"/></g>
<ellipse cx="925.500" cy="349" rx="3.200" ry="4.500" fill="#111"/><path d="M924 347.500q1.500 1.500 0 3.500" stroke="#888" fill="none" stroke-width="0.600"/><circle cx="908.500" cy="356.500" r="2.500" fill="none" stroke="#f7c40e" stroke-width="1.200"/>
<rect x="942.500" y="338.500" width="4" height="23" fill="#f87008" stroke="#111" stroke-width="0.600"/><path d="M942.500 343h4M942.500 348h4M942.500 353h4M942.500 358h4" stroke="#702000" stroke-width="0.500"/>
<path d="M956.4 340.2l2 2M961.4 340.2l-2 2M958.9 339.7v2.500" stroke="#c89000" stroke-width="0.800" fill="none"/>
<g transform="translate(958.9 350.7)"><circle r="8.7" fill="url(#gSm)"/></g>
<ellipse cx="948.500" cy="355" rx="3.500" ry="2.800" fill="#f7d020"/><path d="M951 352l5 4" stroke="#fff" stroke-width="0.800"/>
<g transform="translate(1010.7 352.2)"><circle r="8.7" fill="url(#gSm)"/></g>
<path d="M1004 345.500l-0.500-3 2 2 1-3 1 3 2-2.500 0.500 3" fill="none" stroke="#5a2a20" stroke-width="0.700"/><ellipse cx="1007" cy="348.500" rx="3" ry="2.300" fill="#fff" stroke="#201000" stroke-width="0.700" transform="rotate(25 1007 348.500)"/><ellipse cx="1013.500" cy="350" rx="2.600" ry="2" fill="#fff" stroke="#201000" stroke-width="0.700" transform="rotate(25 1013.500 350)"/><path d="M1004.500 354.500q6 3 12-1" fill="none" stroke="#201000" stroke-width="1"/><rect x="1008" y="355.500" width="2" height="2.500" fill="#fff"/><rect x="1011" y="355.500" width="2" height="2.500" fill="#fff"/>
<g transform="translate(1048.0 350.0)"><circle r="8.7" fill="url(#gSm)"/><ellipse cx="-2.200" cy="-3" rx="2" ry="1.700" fill="#fff" stroke="#2a1200" stroke-width="1"/><ellipse cx="2.400" cy="-3" rx="2" ry="1.700" fill="#fff" stroke="#2a1200" stroke-width="1"/><circle cx="-1.800" cy="-2.800" r="1" fill="#100800"/><circle cx="2.800" cy="-2.800" r="1" fill="#100800"/><path d="M-3 3q3 2.500 6 0" fill="none" stroke="#4a2200" stroke-width="1"/></g>
<path d="M1061.5 339.5l2 2M1066.5 339.5l-2 2M1064.0 339.0v2.500" stroke="#c89000" stroke-width="0.800" fill="none"/>
<g transform="translate(1064.0 350.0)"><circle r="8.7" fill="url(#gSm)"/><ellipse cx="-2.200" cy="-3" rx="2" ry="1.700" fill="#fff" stroke="#2a1200" stroke-width="1"/><ellipse cx="2.400" cy="-3" rx="2" ry="1.700" fill="#fff" stroke="#2a1200" stroke-width="1"/><circle cx="-1.800" cy="-2.800" r="1" fill="#100800"/><circle cx="2.800" cy="-2.800" r="1" fill="#100800"/><path d="M-3 3q3 2.500 6 0" fill="none" stroke="#4a2200" stroke-width="1"/></g>
<path d="M1036.0 355.0h4v1h1.500v1h-1.500v1h-4z" fill="#f7c40e"/><path d="M1036.0 358.0h1v1.500h-1zM1038.0 358.0h1v1.500h-1zM1040.0 358.0h1v1.500h-1z" fill="#f7c40e"/>
<path d="M1049.5 356.0h4v1h1.500v1h-1.500v1h-4z" fill="#f7c40e"/><path d="M1049.5 359.0h1v1.500h-1zM1051.5 359.0h1v1.500h-1zM1053.5 359.0h1v1.500h-1z" fill="#f7c40e"/>
<path d="M1070.0 356.0h4v1h1.500v1h-1.500v1h-4z" fill="#f7c40e"/><path d="M1070.0 359.0h1v1.500h-1zM1072.0 359.0h1v1.500h-1zM1074.0 359.0h1v1.500h-1z" fill="#f7c40e"/>
<path d="M1071 349h3v1h-2v1h2v1h-2v1h2v1h-3z" fill="#f7c40e"/>
<g transform="translate(1112.6 351.0)"><circle r="8.7" fill="url(#gSm)"/><ellipse cx="-2.500" cy="-3.500" rx="2" ry="2.500" fill="#fff" stroke="#2a1200" stroke-width="1"/><ellipse cx="2.500" cy="-3.500" rx="2" ry="2.500" fill="#fff" stroke="#2a1200" stroke-width="1"/><ellipse cx="0" cy="4" rx="2.500" ry="3" fill="#3a1000"/><path d="M-6-1v7M-4.500 0v7M4.500 0v7M6-1v7" stroke="#8a4a00" stroke-width="0.800"/></g>
<g transform="translate(1164.0 350.4)"><circle r="8.7" fill="url(#gSm)"/></g>
<ellipse cx="1161.500" cy="349" rx="2.500" ry="2.300" fill="#ffb0b0" stroke="#5a2000" stroke-width="0.600"/><ellipse cx="1166.800" cy="349" rx="2.500" ry="2.300" fill="#ffb0b0" stroke="#5a2000" stroke-width="0.600"/><path d="M1162 354l4 4M1166 354l-4 4" stroke="#5a3000" stroke-width="0.700"/><rect x="1147" y="346.500" width="2.300" height="7" fill="#fff"/><path d="M1148.200 337.500v9" stroke="#ccc" stroke-width="0.800"/><rect x="1147" y="345.500" width="2.300" height="1.500" fill="#e02020"/><path d="M1146 355h8v2h-5v3h-2z" fill="#f4a820"/>
<path d="M1207.0 337.9l2 2M1212.0 337.9l-2 2M1209.5 337.4v2.500" stroke="#c89000" stroke-width="0.800" fill="none"/>
<g transform="translate(1209.5 348.4)"><circle r="8.7" fill="url(#gSm)"/></g>
<circle cx="1207.500" cy="346.500" r="2.300" fill="#ffe870" stroke="#5a3000" stroke-width="0.600"/><circle cx="1212.500" cy="346.500" r="2.300" fill="#ffe870" stroke="#5a3000" stroke-width="0.600"/><rect x="1207.200" y="341.500" width="1.800" height="2.500" fill="#40b8e8"/><path d="M1205 353.500q4 2 8 0" stroke="#5a3000" fill="none" stroke-width="0.800"/><rect x="1209.500" y="354.500" width="4" height="5.500" rx="1.500" fill="#e80818"/><ellipse cx="1200" cy="352" rx="4" ry="3.300" fill="#f7c40e"/>
<path d="M916.5 378.5l2 2M921.5 378.5l-2 2M919.0 378.0v2.500" stroke="#c89000" stroke-width="0.800" fill="none"/>
<g transform="translate(919.0 389.0)"><circle r="8.7" fill="url(#gSm)"/></g>
<path d="M914.500 385.500q2-2 4 0M919.500 384.500h5" stroke="#4a2000" stroke-width="0.900" fill="none"/><ellipse cx="922" cy="386.500" rx="2" ry="1.400" fill="#fff"/><path d="M915 392q2-2 4 0t4 0" fill="none" stroke="#4a2200" stroke-width="1"/>
<path d="M962.7 377.5l2 2M967.7 377.5l-2 2M965.2 377.0v2.500" stroke="#c89000" stroke-width="0.800" fill="none"/>
<g transform="translate(965.2 388.0)"><circle r="8.7" fill="url(#gSm)"/><ellipse cx="-2.200" cy="-3" rx="2" ry="1.700" fill="#fff" stroke="#2a1200" stroke-width="1"/><ellipse cx="2.400" cy="-3" rx="2" ry="1.700" fill="#fff" stroke="#2a1200" stroke-width="1"/><circle cx="-1.800" cy="-2.800" r="1" fill="#100800"/><circle cx="2.800" cy="-2.800" r="1" fill="#100800"/><path d="M-3 3q3 2.500 6 0" fill="none" stroke="#4a2200" stroke-width="1"/></g>
<g transform="translate(1015.2 386.0)"><circle r="8.7" fill="url(#gSm)"/></g>
<ellipse cx="1011.500" cy="380" rx="2.300" ry="2" fill="#fff" stroke="#201000" stroke-width="0.700"/><ellipse cx="1016.500" cy="379.500" rx="2.300" ry="2" fill="#fff" stroke="#201000" stroke-width="0.700"/><circle cx="1012.300" cy="380" r="0.800" fill="#111"/><circle cx="1017.300" cy="379.500" r="0.800" fill="#111"/><path d="M1010 387q5 4 10-1" fill="none" stroke="#5a3000" stroke-width="0.900"/>
<path d="M1024 378.500l9-2M1026 374l5 5M1031 373.500l-1 7M1033 380l-5-1" stroke="#f7c40e" stroke-width="1.100" fill="none"/><path d="M996 391l8 0.500M998 387l5 6M1003 388l-1 6M996 395l6-3" stroke="#f7c40e" stroke-width="1.100" fill="none"/>
</svg>
<div id="s2" class="abs o" style="left:898px;top:269px;font-weight:bold">Еще смайлики...</div>
<div class="hr" style="left:898px;top:286px;width:347px"></div>
<div class="abs" style="left:898px;top:293px;color:#848484;line-height:13px;letter-spacing:0.15px"><b class="o" style="letter-spacing:-0.4px">BBCode</b> <i>ВКЛЮЧЕН</i><br>[img] <i>ВКЛЮЧЕН</i><br>[flash] <i>ВЫКЛЮЧЕН</i><br>[url] <i>ВКЛЮЧЕН</i><br>Смайлики <i>ВКЛЮЧЕНЫ</i></div>

<div class="panel" style="left:6px;top:468px;width:1251px;height:49px"></div>
<div id="h1" class="btn hot" style="left:490px;top:480px;width:95px;height:24px">Поднять тему</div>
<div id="h2" class="btn" style="left:590px;top:481px;width:96px">Предпросмотр</div>
<div id="h3" class="btn" style="left:695px;top:481px;width:75px">Отправить</div>

<div id="tb1" class="abs tab" style="left:13px;top:537px;width:90px;color:#7d7d7d;background:linear-gradient(#2d2d2d,#1d1d1d)">Настройки</div>
<div id="tb2" class="abs tab" style="left:104px;top:537px;width:156px;color:#e8750a;background:#000">Добавить вложения</div>
<div class="panel" style="left:6px;top:564px;width:1251px;height:117px"></div>
<div class="cb" style="top:571px"></div><div id="k1" class="cbl" style="top:571px">Отключить в этом сообщении BBCode</div>
<div class="cb" style="top:589px"></div><div id="k2" class="cbl" style="top:588px">Отключить в этом сообщении смайлики</div>
<div class="cb" style="top:606px"></div><div id="k3" class="cbl" style="top:606px">Не преобразовывать адреса URL в ссылки</div>
<div class="cb ck" style="top:624px"></div><div id="k4" class="cbl" style="top:623px">Присоединить подпись (подпись можно изменять в личном разделе)</div>
<div class="cb" style="top:641px"></div><div id="k5" class="cbl" style="top:641px">Сообщать мне о получении ответа</div>
<div class="cb" style="top:659px"></div><div id="k6" class="cbl" style="top:658px">Закрыть тему</div>

<div id="r1" class="abs o" style="left:6px;top:688px;font-weight:bold">Вернуться в <span>Сайт и форум</span></div>
<div id="g1" class="abs" style="left:929px;top:700px;color:#f0f0f0">Перейти:</div>
<div id="g2" class="sel" style="left:991px;top:699px;width:200px;padding-left:17px">Сайт и форум</div>
<div class="btn" style="left:1195px;top:696px;width:62px">Перейти</div>
<div id="g3" class="abs" style="left:900px;top:728px;color:#f0f0f0">Быстрые действия:</div>
<div id="g4" class="sel" style="left:1023px;top:726px;width:168px">Закрыть тему</div>
<div class="btn" style="left:1195px;top:723px;width:62px">Перейти</div>

<div id="q1" class="abs o" style="left:6px;top:733px;font-size:13px;-webkit-text-stroke:0.35px #e8750a">КТО СЕЙЧАС НА КОНФЕРЕНЦИИ</div>
<div class="hr" style="left:6px;top:749px;width:1251px"></div>
<div class="abs w" id="w1" style="top:755px">Сейчас этот форум просматривают:</div><div class="abs" id="w2" style="top:755px;font-weight:bold;color:#8fd66a">Alexey_st</div><div class="abs w" id="w3" style="top:755px">и гости: 0</div>
<div class="panel" style="left:6px;top:773px;width:1251px;height:27px;background:#1c1c1c"></div>
<svg class="abs" style="left:0;top:778px" width="430" height="16" viewBox="0 914 430 16">
<path d="M25 915l5 3.500v6l-5 3-5-3v-6z" fill="#8a8a8a"/><path d="M25 915l5 3.500-5 3-5-3z" fill="#c8c8c8"/><path d="M25 921.500l5-3v6l-5 3z" fill="#5a5a5a"/><path d="M24 925l1.500 1.500 2.500-3" fill="none" stroke="#fff" stroke-width="1.200"/>
<rect x="151" y="917" width="9.500" height="10" fill="#fff" stroke="#3a7ad0" stroke-width="1.200"/><path d="M153 921.500l2.300 2.800 3.700-5.300" fill="none" stroke="#1850a8" stroke-width="1.700"/>
<path d="M313.500 916.500h8v11l-4-3-4 3z" fill="#fff" stroke="#4a8ad8" stroke-width="1.100"/><path d="M317.500 917.500l1 2.200 2.300 0.200-1.800 1.500 0.600 2.300-2.100-1.300-2.100 1.300 0.600-2.300-1.800-1.500 2.300-0.200z" fill="#d8183a"/>
<rect x="411" y="916.500" width="8" height="10" fill="#fff" stroke="#5a9ae8" stroke-width="1"/><path d="M412.500 919h5M412.500 921.500h5M412.500 924h5" stroke="#3a6ac8" stroke-width="1"/><path d="M409 917v-2h2M419 915h2v2M421 926v2h-2M411 928h-2v-2" fill="none" stroke="#a8c8e8" stroke-width="1"/>
</svg>
<div id="f1" class="abs o" style="left:34px;top:781px;font-weight:bold">Список форумов</div>
<div id="f2" class="abs o" style="left:165px;top:781px;font-weight:bold">Подписаться на тему</div>
<div id="f3" class="abs o" style="left:327px;top:781px;font-weight:bold">В закладки</div>
<div id="f4" class="abs o" style="left:424px;top:781px;font-weight:bold">Поднять тему</div>
<div class="abs o" id="f5" style="top:780px;font-weight:bold">Наша команда</div><div class="abs w" id="f6" style="top:780px">•</div><div class="abs o" id="f7" style="top:780px;font-weight:bold">Удалить cookies конференции</div><div class="abs w" id="f8" style="top:780px">•</div><div class="abs w" id="f9" style="top:780px">Часовой пояс: UTC + 2 часа</div>
<div class="abs" id="p1" style="top:806px;color:#5c5c5c">Powered by</div><div class="abs o" id="p2" style="top:806px;font-weight:bold">phpBB</div><div class="abs" id="p3" style="top:806px;color:#5c5c5c">© 2000, 2002, 2005, 2007 phpBB Group</div>

<div class="callout" style="left:522px;top:236px;width:262px;height:144px"><div style="left:14px;top:33px">Новая кнопка находится в<br>более интуитивно понятном<br>месте.</div></div>
<div class="callout" style="left:464px;top:584px;width:266px;height:116px"><div style="left:19px;top:26px">Старая кнопочка находится<br>здесь. Ее почему то никто<br>не может найти.</div></div>
<svg class="abs" style="left:0;top:0" width="1263" height="811" viewBox="0 136 1263 811">
<g fill="#ffff00" stroke="none">
<path d="M594.4,511.3 L599.2,513.2 L566,600.2 Q571,597 578,595.400 Q561,608 551.6,626.4 Q555,606 553.3,586.200 Q557,592 560.5,597 Z"/>
<path d="M478.8,836.3 L484,838.2 L445.6,900 Q452,897.500 460.3,896.200 Q443,905 430.2,917.8 Q434,903 432.5,889.600 Q436,894 440.4,897 Z"/>
</g>
</svg>
</div>
<div id="vscroll">
<svg class="abs" style="left:0;top:0" width="17" height="812" viewBox="0 0 17 812">
<rect x="0" y="0" width="17" height="812" fill="#f2f2f2"/>
<rect x="0" y="0" width="1" height="812" fill="#ffffff"/>
<path d="M4.500 10.500h8l-4-4.500z" fill="#4a4a4a"/>
<path d="M4.500 801.500h8l-4 4.500z" fill="#4a4a4a"/>
<rect x="1.500" y="509.500" width="14" height="254" rx="1.500" fill="url(#gTh)" stroke="#9a9a9a"/>
<path d="M5.500 634.500h6M5.500 636.500h6M5.500 638.500h6" stroke="#8a8a8a" stroke-width="1"/>
</svg></div>
<div id="findbar">
<svg class="abs" style="left:7px;top:7px" width="10" height="10" viewBox="0 0 10 10"><path d="M1 1l8 8M9 1l-8 8" stroke="#2a3a6a" stroke-width="1.600"/></svg>
<span class="abs" id="fb1" style="left:29px;top:7px">Найти:</span>
<div class="abs" style="left:70px;top:3px;width:125px;height:20px;border:1px solid #a3abbd;background:#fff"></div><span class="abs" id="fb0" style="left:75px;top:7px">alexey_s</span>
<svg class="abs" style="left:199px;top:4px" width="14" height="16" viewBox="0 0 14 16"><path d="M4 1h6v7h3.500l-6.500 7-6.500-7h3.500z" fill="#2a7ae0" stroke="#1a5ab8" stroke-width="0.800"/></svg>
<span class="abs" id="fb2" style="left:218px;top:7px"><u>С</u>ледующее</span>
<svg class="abs" style="left:288px;top:4px" width="14" height="16" viewBox="0 0 14 16"><path d="M4 15h6v-7h3.500l-6.500-7-6.500 7h3.500z" fill="#2a7ae0" stroke="#1a5ab8" stroke-width="0.800"/></svg>
<span class="abs" id="fb3" style="left:307px;top:7px"><u>П</u>редыдущее</span>
<svg class="abs" style="left:382px;top:4px" width="16" height="16" viewBox="0 0 16 16"><path d="M9 1.500l5 3.500-6 7.500-4.500-3z" fill="#f4f4f8" stroke="#555" stroke-width="1"/><path d="M3.500 9.500l4.500 3-4 1.500-2.500 0.500z" fill="#e89a20" stroke="#555" stroke-width="0.800"/></svg>
<span class="abs" id="fb4" style="left:402px;top:7px">Подс<u>в</u>етить все</span>
<div class="abs" style="left:495px;top:7px;width:13px;height:13px;border:1px solid #8e8e8e;background:linear-gradient(135deg,#d2d4d8,#fafafa);box-shadow:inset 0 0 0 1px #f4f4f4"></div>
<span class="abs" id="fb5" style="left:514px;top:7px">Учесть <u>р</u>егистр</span>
</div>
<div id="statusbar">
<svg class="abs" style="left:0;top:0" width="1280" height="21" viewBox="0 973 1280 21">
<rect x="4.500" y="976.500" width="21" height="14" fill="#f4f2f2" stroke="#c8c6c6"/><path d="M4.500 991v-14.500h21" fill="none" stroke="#1a1a1a" stroke-width="1.200"/>
<path d="M8.500 979l8 5.500" stroke="#bdbdbd" stroke-width="2.600"/><path d="M8.500 979l8 5.500" stroke="#555" stroke-width="1"/><path d="M16 983l5 4.500" stroke="#111" stroke-width="3"/><circle cx="21.500" cy="987.500" r="1.800" fill="#111"/>
<rect x="36.500" y="976.500" width="21" height="14" fill="#d8d8d8" stroke="#b4b4b4"/><path d="M36.500 991v-14.500h21" fill="none" stroke="#1a1a1a" stroke-width="1.200"/><rect x="38.500" y="978.500" width="17" height="10" fill="url(#gRul)" stroke="#2a2a2a" stroke-width="1"/>
<path d="M41.500 988v-2.500M45.500 988v-4M49.500 988v-2.500M53.500 988v-2.500" stroke="#1a1a1a" stroke-width="1"/>
<path d="M30.500 974v19M62.500 974v19" stroke="#dcdada"/><path d="M31.500 974v19M63.500 974v19" stroke="#fafafa"/>
<g stroke="#c9c9c9" stroke-width="1"><path d="M1129.500 974v19M1155.500 974v19M1181.500 974v19M1209.500 974v19M1248.500 974v19"/></g>
<ellipse cx="1142.500" cy="984" rx="3.500" ry="5.500" fill="#4a4a4a" transform="rotate(35 1142.500 984)"/><path d="M1136 981l12 6M1137 986l10-3M1139 990l7-10" stroke="#4a4a4a" stroke-width="0.800"/><circle cx="1148" cy="978.500" r="2" fill="#222"/>
<circle cx="1169" cy="983" r="8" fill="url(#gRed)" stroke="#a81818" stroke-width="0.600"/><path d="M1165.500 979.500l7 7M1172.500 979.500l-7 7" stroke="#d8ecf8" stroke-width="2.400" stroke-linecap="round"/>
<circle cx="1195.500" cy="983.500" r="6.500" fill="#e4e4e4" stroke="#9a9a9a" stroke-width="2" stroke-dasharray="2.500 1.500"/>
<rect x="1215" y="976" width="14" height="14" rx="2.500" fill="#1a8ad0"/><path d="M1217.500 978.500c3 1 4 3 4.500 5c0.500-2 1.500-4 4.500-5c0 3-1 5-4 5.500c3 0.500 3.500 2 3.500 4c-2.500-0.500-3.500-2-4-4c-0.500 2-1.500 3.500-4 4c0-2 0.500-3.500 3.500-4c-3-0.500-4-2.500-4-5.500z" fill="#e8f6ff"/>
<path d="M1231 980.500l3.500 3-3.500 3z" fill="#111"/>
<rect x="1256" y="975" width="16" height="16" fill="#1a7ab8"/>
</svg>
<span class="abs" id="st1" style="left:69px;top:4px">Готово</span>
<div class="abs" style="left:1257.500px;top:3.500px;width:14px;font:bold 7.500px/7px 'Liberation Mono',monospace;color:#fff;letter-spacing:2.200px;white-space:pre">SA
PE</div>
<div class="abs" style="left:1190px;top:5px;font:bold 8px 'Liberation Sans',sans-serif;color:#8a8a8a">SQ</div>
</div>
<div id="taskbar"><svg class="abs" style="left:0;top:0" width="60" height="4" viewBox="0 994 60 4"><ellipse cx="30" cy="1006" rx="14.500" ry="12.500" fill="#b4d2f0" stroke="#06122e" stroke-width="2.400"/></svg></div>
</body>
</html>
